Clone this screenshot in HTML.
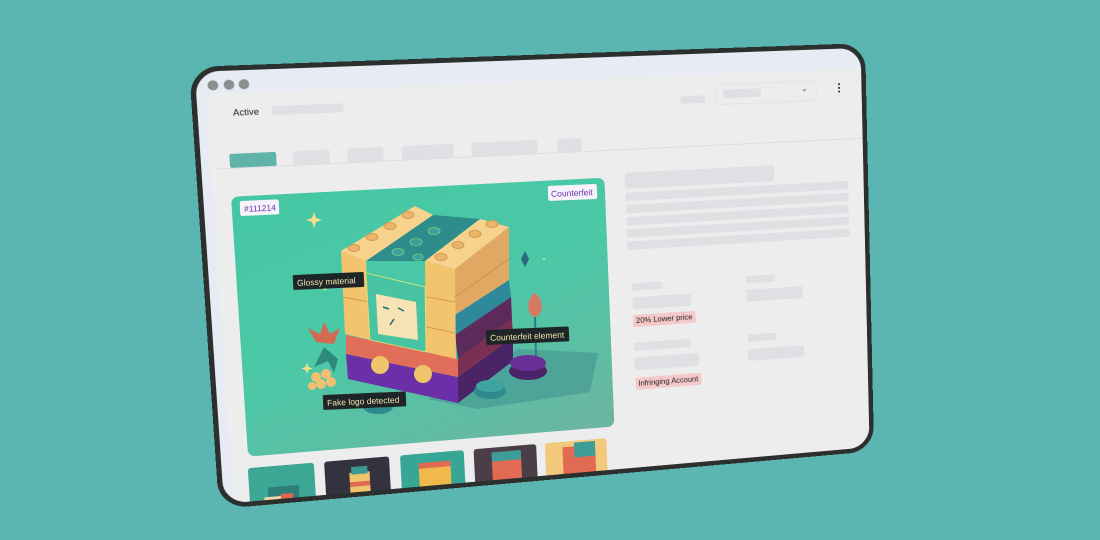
<!DOCTYPE html>
<html><head><meta charset="utf-8"><style>
*{margin:0;padding:0;box-sizing:border-box}
body{width:1100px;height:540px;background:#5bb5b0;overflow:hidden;position:relative;font-family:"Liberation Sans",sans-serif}
#dev{position:absolute;left:0;top:0;width:680px;height:450px;transform-origin:0 0;
transform:matrix3d(1.10584,-0.029618,0,0.000129,0.081756,1.01720,0,0.00006857,0,0,1,0,189,67,0,1);
border:5px solid #2b302f;border-radius:28px;background:#e7ebf3;overflow:hidden}
.a{position:absolute}
.ph{position:absolute;background:#dfe0e3;border-radius:2px}
#panel{position:absolute;left:9px;top:22px;right:0;bottom:0;background:#ededee;border-top-left-radius:4px}
.dot{position:absolute;width:10px;height:10px;border-radius:50%;background:#8d8e90;top:9px}
.badge{position:absolute;background:#f5c9c9;color:#222;font-size:8px;padding:2px 3px;border-radius:2px;line-height:9px;white-space:nowrap}
.th{position:absolute;top:405px;width:64px;height:60px;border-radius:3px;overflow:hidden}
</style></head><body>
<div id="dev">
 <div class="dot" style="left:11px"></div><div class="dot" style="left:26px"></div><div class="dot" style="left:40px"></div>
 <div id="panel"></div>
 <div class="a" style="left:33px;top:37px;font-size:9px;color:#222">Active</div>
 <div class="ph" style="left:70px;top:37px;width:68px;height:9px"></div>
 <div class="ph" style="left:476px;top:44px;width:26px;height:8px"></div>
 <div class="a" style="left:513px;top:33px;width:108px;height:22px;border:1px solid #e2e3e5;border-radius:4px"></div>
 <div class="ph" style="left:521px;top:39px;width:40px;height:9px"></div>
 <div class="a" style="left:604px;top:36px;font-size:9px;color:#444">&#8964;</div>
 <div class="a" style="left:644px;top:36px;width:3px;height:11px;background:radial-gradient(circle,#333 1px,transparent 1.3px) 0 0/3px 4px"></div>
 <div class="a" style="left:14px;top:97px;right:0;height:1px;background:#dcdde0"></div>
 <div class="a" style="left:27px;top:83px;width:44px;height:14px;background:#5fb3a9;border-radius:2px"></div>
 <div class="ph" style="left:87px;top:83px;width:35px;height:14px"></div>
 <div class="ph" style="left:139px;top:83px;width:35px;height:14px"></div>
 <div class="ph" style="left:192px;top:83px;width:51px;height:14px"></div>
 <div class="ph" style="left:261px;top:83px;width:66px;height:14px"></div>
 <div class="ph" style="left:347px;top:83px;width:25px;height:14px"></div>
 <div class="a" style="left:26px;top:126px;width:368px;height:267px;border-radius:7px;background:linear-gradient(160deg,#45c7a4 0%,#4cc8a6 50%,#6db4a2 100%)"></div>
 <div class="ph" style="left:415px;top:122px;width:158px;height:17px;border-radius:3px"></div>
 <div class="ph" style="left:415px;top:143px;width:238px;height:9px"></div>
 <div class="ph" style="left:415px;top:156px;width:238px;height:9px"></div>
 <div class="ph" style="left:415px;top:169px;width:238px;height:9px"></div>
 <div class="ph" style="left:415px;top:182px;width:238px;height:9px"></div>
 <div class="ph" style="left:415px;top:195px;width:238px;height:9px"></div>
 <div class="ph" style="left:418px;top:240px;width:32px;height:8px"></div>
 <div class="ph" style="left:418px;top:255px;width:62px;height:13px"></div>
 <div class="badge" style="left:418px;top:274px">20% Lower price</div>
 <div class="ph" style="left:418px;top:304px;width:60px;height:9px"></div>
 <div class="ph" style="left:418px;top:320px;width:68px;height:14px"></div>
 <div class="badge" style="left:418px;top:342px">Infringing Account</div>
 <div class="ph" style="left:539px;top:240px;width:31px;height:8px"></div>
 <div class="ph" style="left:539px;top:255px;width:61px;height:13px"></div>
 <div class="ph" style="left:539px;top:304px;width:31px;height:8px"></div>
 <div class="ph" style="left:539px;top:320px;width:61px;height:13px"></div>
 <div class="th" style="left:25px;background:#3da795"><div class="a" style="left:18px;top:22px;width:30px;height:22px;background:#2f7d78"></div><div class="a" style="left:14px;top:32px;width:16px;height:14px;background:#f3d9a8"></div><div class="a" style="left:30px;top:30px;width:12px;height:12px;background:#e06a52"></div></div>
 <div class="th" style="left:99px;background:#34323f"><div class="a" style="left:24px;top:14px;width:20px;height:32px;background:#f0c46a"></div><div class="a" style="left:24px;top:24px;width:20px;height:5px;background:#e06a52"></div><div class="a" style="left:26px;top:8px;width:16px;height:8px;background:#3b9a96"></div></div>
 <div class="th" style="left:174px;background:#38a695"><div class="a" style="left:18px;top:10px;width:32px;height:30px;background:#f1b94c"></div><div class="a" style="left:18px;top:10px;width:32px;height:6px;background:#e06a52"></div></div>
 <div class="th" style="left:248px;background:#4b3e49"><div class="a" style="left:18px;top:10px;width:30px;height:30px;background:#e06a52"></div><div class="a" style="left:18px;top:5px;width:30px;height:10px;background:#3f9d98"></div></div>
 <div class="th" style="left:321px;background:#f2c97b"><div class="a" style="left:18px;top:6px;width:34px;height:34px;background:#e06a52"></div><div class="a" style="left:30px;top:2px;width:22px;height:16px;background:#3f9d98"></div></div>
</div>
<svg class="a" style="left:0;top:0" width="1100" height="540" viewBox="0 0 1100 540" font-family="Liberation Sans, sans-serif">
<g transform="translate(-2,-3)">
 <polygon points="430,402 520,352 600,356 592,395 480,412" fill="#3f8f8f" opacity="0.55"/>
 <polygon points="348,357 460,380 460,406 350,382" fill="#6b2fa8"/>
 <polygon points="460,380 515,340 515,364 460,406" fill="#4b2468"/>
 <polygon points="348,338 460,362 460,380 348,357" fill="#e06e58"/>
 <polygon points="460,362 514,322 515,340 460,380" fill="#7b2f52"/>
 <polygon points="457,272 511,230 511,283 457,318" fill="#e0a862"/>
 <polygon points="457,318 511,283 513,300 457,338" fill="#2e8a9a"/>
 <polygon points="457,338 513,300 514,322 460,362" fill="#5d2a5c"/>
 <polygon points="427,264 457,272 458,362 428,355" fill="#f2c46e"/>
 <polygon points="368,264 435,218 482,222 427,264" fill="#2e8c8a"/>
 <polygon points="343,254 368,264 372,343 347,337" fill="#f2c46e"/>
 <polygon points="343,254 417,209 435,218 368,264" fill="#f7d28d"/>
 <polygon points="427,264 482,222 511,230 457,272" fill="#f7d28d"/>
 <g fill="#e9b66a" stroke="#d49a55" stroke-width="1">
  <ellipse cx="356" cy="251" rx="6" ry="3.5"/><ellipse cx="374" cy="240" rx="6" ry="3.5"/><ellipse cx="392" cy="229" rx="6" ry="3.5"/><ellipse cx="410" cy="218" rx="6" ry="3.5"/>
  <ellipse cx="443" cy="260" rx="6" ry="3.5"/><ellipse cx="460" cy="248" rx="6" ry="3.5"/><ellipse cx="477" cy="237" rx="6" ry="3.5"/><ellipse cx="494" cy="227" rx="6" ry="3.5"/>
 </g>
 <g fill="#3aa0a0" stroke="#7dd07a" stroke-width="0.8"><ellipse cx="400" cy="255" rx="6" ry="3.5"/><ellipse cx="418" cy="245" rx="6" ry="3.5"/><ellipse cx="436" cy="234" rx="6" ry="3.5"/><ellipse cx="420" cy="260" rx="5" ry="3"/></g>
 <g stroke="#c98d50" stroke-width="0.8"><line x1="345" y1="300" x2="370" y2="305"/><line x1="429" y1="300" x2="457" y2="305"/><line x1="429" y1="330" x2="457" y2="336"/><line x1="457" y1="300" x2="511" y2="262"/></g>
 <polygon points="368,276 427,290 428,355 372,343" fill="#48c4a2" stroke="#e4e36a" stroke-width="0.8"/>
 <polygon points="378,297 418,305 420,343 380,337" fill="#f6e3b4"/>
 <path d="M385 310 l6 2 M400 311 l6 3 M396 322 l-4 6" stroke="#1e6b70" stroke-width="1.5" fill="none"/>
 <circle cx="382" cy="368" r="9" fill="#f0c46a"/><circle cx="425" cy="377" r="9" fill="#f0c46a"/>
 <ellipse cx="492" cy="394" rx="16" ry="8" fill="#2f8a8e"/><ellipse cx="492" cy="389" rx="14" ry="6" fill="#3ea4a2"/>
 <ellipse cx="380" cy="410" rx="15" ry="7" fill="#2f8a8e"/><ellipse cx="380" cy="406" rx="13" ry="5" fill="#3ea4a2"/>
 <line x1="537" y1="320" x2="538" y2="360" stroke="#2c7d85" stroke-width="2"/>
 <ellipse cx="530" cy="374" rx="19" ry="9" fill="#4a2468"/><ellipse cx="530" cy="366" rx="18" ry="8" fill="#6b2f98"/>
 <path d="M537 296 C528 302 528 318 537 320 C546 318 546 302 537 296Z" fill="#d77865"/>
 <path d="M318 345 l-8 -14 l12 6 l4 -12 l6 12 l10 -6 l-6 16Z" fill="#d56a52"/>
 <path d="M326 350 l-10 20 l14 -6 l6 12 l4 -14Z" fill="#2f8a7e"/>
 <g fill="#f0c070"><circle cx="318" cy="380" r="5"/><circle cx="328" cy="377" r="5"/><circle cx="323" cy="387" r="5"/><circle cx="333" cy="385" r="5"/><circle cx="314" cy="389" r="4"/></g>
 <g fill="#f2e08a"><path d="M316 215 l2 6 l6 2 l-6 2 l-2 6 l-2 -6 l-6 -2 l6 -2Z"/><path d="M309 366 l1.5 4 l4 1.5 l-4 1.5 l-1.5 4 l-1.5 -4 l-4 -1.5 l4 -1.5Z"/><circle cx="327" cy="292" r="1.5"/><circle cx="546" cy="262" r="1"/></g>
 <path d="M527 254 l4 8 l-4 8 l-4 -8Z" fill="#2a6a7a"/>
</g>
 <g transform="rotate(-2.5 241 208)"><rect x="240" y="201" width="39" height="15" rx="2" fill="#f7f3fb"/><text x="244" y="212" font-size="8.5" fill="#6b2fa8">#111214</text></g>
 <g transform="rotate(-2.5 548 193)"><rect x="548" y="186" width="49" height="15" rx="2" fill="#f7f3fb"/><text x="551" y="197" font-size="8.5" fill="#6b2fa8">Counterfeit</text></g>
 <g transform="rotate(-2.5 293 282)"><rect x="293" y="275" width="71" height="15" rx="1.5" fill="#1e2526"/><text x="297" y="286" font-size="8.5" fill="#f1e6b0">Glossy material</text></g>
 <g transform="rotate(-2.5 486 336)"><rect x="486" y="330" width="83" height="15" rx="1.5" fill="#1e2526"/><text x="490" y="341" font-size="8.5" fill="#f1e6b0">Counterfeit element</text></g>
 <g transform="rotate(-2.5 323 401)"><rect x="323" y="395" width="83" height="15" rx="1.5" fill="#1e2526"/><text x="327" y="406" font-size="8.5" fill="#f1e6b0">Fake logo detected</text></g>
</svg>
</body></html>
